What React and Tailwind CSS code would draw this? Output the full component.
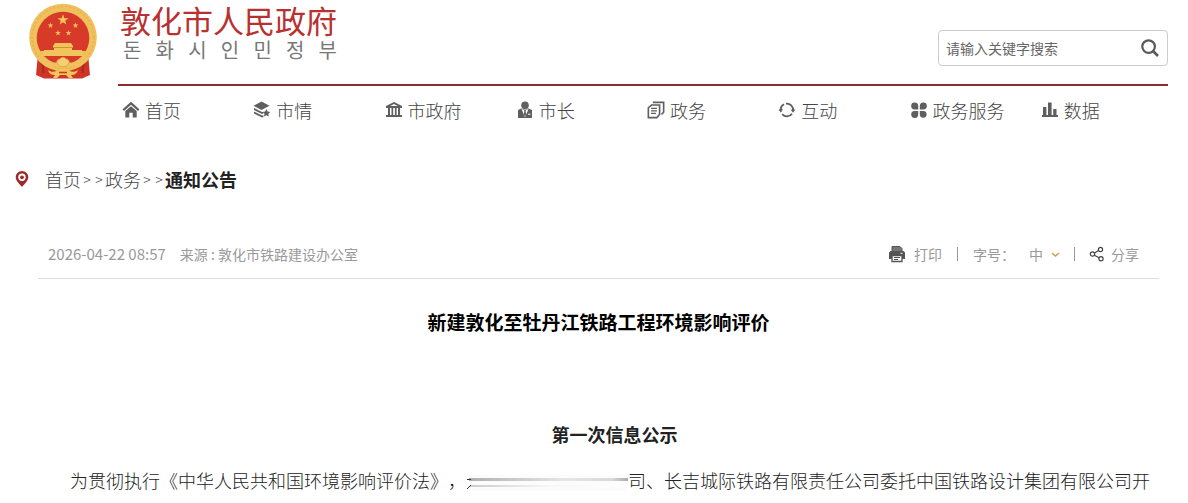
import React from "react";

const HomeIcon = () => (
  <svg width="18" height="18" viewBox="0 0 18 18" fill="#5f5f5f">
    <path d="M9 .8.600 8.200l1.400 1.700L9 3.800l7 6.100 1.400-1.700z" />
    <path d="M3.300 10 9 5.200l5.700 4.800v6.500h-4v-4.800H7.300v4.800h-4z" />
  </svg>
);

const LayersIcon = () => (
  <svg width="18" height="18" viewBox="0 0 18 18" fill="#5f5f5f">
    <path d="M8.500.500 16.500 4.700 8.500 8.900.500 4.700z" />
    <path d="M1 7v2l8 4 1.500-.7-.6-1.300L9 11z" />
    <path d="M1 10.600v2l8 4 1.500-.7-.2-1.700-1.300.4z" />
    <path d="m13.400 8 1.200 2.500 2.700.4-2 1.900.5 2.700-2.400-1.300-2.400 1.300.5-2.700-2-1.900 2.700-.4z" />
  </svg>
);

const BankIcon = () => (
  <svg width="18" height="18" viewBox="0 0 18 18" fill="#5f5f5f">
    <path fillRule="evenodd" d="M9 1 1 5v2h16V5zM9 3l3.800 2H5.200z" />
    <path d="M3 7h2v7H3zM6.500 7h1.700v7H6.500zM9.900 7h1.700v7H9.900zM13 7h2v7h-2zM1 14h16v2H1z" />
  </svg>
);

const MayorIcon = () => (
  <svg width="18" height="18" viewBox="0 0 18 18" fill="#5f5f5f">
    <circle cx="9" cy="4.2" r="3.8" />
    <path d="M5.300 7.600 2 9v8h14V9l-3.300-1.400z" />
    <path d="M5.500 8 9 16.500 12.500 8l-1.500.5H7z" fill="#fff" />
    <path d="M8 9h2l-.4 1.500.7 3L9 15.500l-1.300-2 .7-3z" />
    <path d="M12 13.200h2.500" stroke="#fff" strokeWidth="1" />
  </svg>
);

const DocsIcon = () => (
  <svg width="18" height="18" viewBox="0 0 20 20" fill="none" stroke="#5f5f5f" strokeWidth="1.8">
    <path d="M5 4.500h9v10.200L11 18.500H1.500V7.500z" />
    <path d="M6.500 1.500h12v11l-2.400 2.400" />
    <path d="M4.500 8.200H11M4.500 11H11M4.500 13.800H10" strokeWidth="1.4" />
  </svg>
);

const CycleIcon = () => (
  <svg width="18" height="18" viewBox="0 0 18 18" fill="none" stroke="#5f5f5f" strokeWidth="1.8">
    <path d="M3 11.200A6.200 6.200 0 0 1 6 3.300M8 2.700a6.200 6.200 0 0 1 7 7M14 12.700a6.200 6.200 0 0 1-9.800.4" />
    <path d="m12.600 8.800 4.800-.2-2.300 3.200zM.600 9.800l4.600-.6-2.500-2.800z" fill="#5f5f5f" stroke="none" />
  </svg>
);

const CloverIcon = () => (
  <svg width="18" height="18" viewBox="0 0 18 18" fill="#5f5f5f">
    <path d="M4.600 1.500A3.500 3.500 0 0 1 8.200 5v3.400H4.600a3.400 3.400 0 0 1 0-6.900zM13.400 1.500a3.400 3.400 0 0 1 0 6.900H9.800V5a3.500 3.500 0 0 1 3.600-3.500zM4.600 9.900h3.600v3.300a3.500 3.500 0 1 1-3.600-3.300zM9.800 9.900h3.600a3.400 3.400 0 1 1-3.600 3.400z" />
  </svg>
);

const BarsIcon = () => (
  <svg width="18" height="18" viewBox="0 0 18 18" fill="#5f5f5f">
    <path d="M2 6h3.400v8H2zM7 1.500h3.600V14H7zM12.200 8h3.300v6h-3.300zM1 14h16v2H1z" />
  </svg>
);

const SearchIcon = () => (
  <svg width="20" height="20" viewBox="0 0 20 20" fill="none" stroke="#5a5a5a" strokeWidth="2.2">
    <circle cx="8.600" cy="8.600" r="6.300" />
    <path d="m13 13 5 5" strokeWidth="2.6" />
  </svg>
);

const PinIcon = () => (
  <svg width="14" height="16" viewBox="0 0 14 16">
    <path d="M7 0a6.300 6.300 0 0 1 6.300 6.300C13.300 9.800 9.500 13 7 16 4.500 13 .700 9.800.700 6.300A6.300 6.300 0 0 1 7 0z" fill="#9c2b2b" />
    <circle cx="7" cy="6.300" r="3.700" fill="#fff" />
    <circle cx="7" cy="6.300" r="1.900" fill="#9c2b2b" />
  </svg>
);

const PrinterIcon = () => (
  <svg width="18" height="18" viewBox="0 0 18 18">
    <path d="M4 1.500h8l2 2V7H4z" fill="#777" stroke="#555" />
    <path d="M2.500 6h13L17 7.500V14h-3v-3H4v3H1V7.500z" fill="#555" />
    <path d="M4 10.500h10v6H4z" fill="#fff" stroke="#555" strokeWidth="1.3" />
    <path d="M6 12.500h6M6 14.500h4" stroke="#555" />
    <path d="M12.500 8.300h2" stroke="#fff" />
  </svg>
);

const ShareIcon = () => (
  <svg width="16" height="16" viewBox="0 0 16 16" fill="none" stroke="#444" strokeWidth="1.2">
    <circle cx="3.500" cy="8" r="2.200" />
    <circle cx="11.500" cy="3.500" r="2.100" />
    <circle cx="12" cy="12.800" r="2.100" />
    <path d="m5.400 7 4.200-2.500M5.300 9.200l4.800 2.600" />
  </svg>
);

const STAR = "M0-5 1.200-1.600H4.800L1.900.600 2.900 4 0 2-2.900 4-1.900.600-4.800-1.600H-1.200z";

const Emblem = () => (
  <svg width="70" height="76" viewBox="8 3 70 76" role="img" aria-label="国徽">
    <path d="M18 54 16 75l8 3.500h38l8-3.500-2-21z" fill="#cf3426" />
    <path d="M20 60c3 4 4 8 3 13M66 60c-3 4-4 8-3 13" stroke="#a92a20" strokeWidth="2" fill="none" />
    <circle cx="43" cy="37.500" r="33.800" fill="#efc05c" />
    <circle cx="43" cy="37.500" r="31" fill="none" stroke="#e6b24c" strokeWidth="1.5" strokeDasharray="2 2" />
    <circle cx="43" cy="38" r="26.300" fill="#d83a2a" />
    <g fill="#f2c45c">
      <path d={STAR} transform="translate(43 20) scale(1.15)" />
      <path d={STAR} transform="translate(30.500 25.500) scale(.6)" />
      <path d={STAR} transform="translate(55.500 25.500) scale(.6)" />
      <path d={STAR} transform="translate(38 33) scale(.6)" />
      <path d={STAR} transform="translate(48.500 33) scale(.6)" />
      <path d="M35 43h16l2 3v1h-1v3h10v4H24v-4h10v-3h-1v-1z" />
      <path d="M20 51h46l-3 5H23z" />
    </g>
    <path d="M33 47.500h20" stroke="#d98e35" />
    <path d="M20 56c6 6 13 8 18 6l5-3 5 3c5 2 12 0 18-6l3 2c-4 6-10 9-17 9H34c-7 0-13-3-17-9z" fill="#efc05c" />
    <path d="M37 63a3 3 0 0 1 3-4 3.500 3.500 0 0 1 6 0 3 3 0 0 1 3 4l-3 3.500h-6z" fill="#f7cf72" stroke="#dda03c" strokeWidth=".8" />
    <path d="M28 70c4 3 8 2 11-1h8c3 3 7 4 11 1-1 4-4 5-7 5l2 3h-4l-3-3h-6l-3 3h-4l2-3c-3 0-6-1-7-5z" fill="#f2c45c" />
    <path d="M39 72.500h8" stroke="#cf3426" strokeWidth="1.5" />
  </svg>
);

// Blurred-out company name inside the first paragraph
const Redacted = () => (
  <svg width="162" height="16" viewBox="0 0 162 16" preserveAspectRatio="none" className="inline-block align-middle" aria-hidden="true">
    <defs>
      <linearGradient id="upper">
        <stop offset="0" stopColor="#b0b0b0" />
        <stop offset="0.6" stopColor="#e6e6e6" />
        <stop offset="0.9" stopColor="#d8d8d8" />
        <stop offset="1" stopColor="#aaa" />
      </linearGradient>
      <linearGradient id="lower">
        <stop offset="0" stopColor="#ccc" />
        <stop offset="0.5" stopColor="#f6f6f6" />
        <stop offset="1" stopColor="#fff" />
      </linearGradient>
    </defs>
    <rect x="4" width="156" height="16" fill="#fcfcfc" />
    <rect x="3" y="3" width="159" height="3" fill="url(#upper)" />
    <rect x="4" y="10" width="156" height="2" fill="url(#lower)" />
    <path d="M1 4.500h4M1 14l4-4" stroke="#333" />
  </svg>
);

const navItems = [
  { name: "首页", icon: <HomeIcon /> },
  { name: "市情", icon: <LayersIcon /> },
  { name: "市政府", icon: <BankIcon /> },
  { name: "市长", icon: <MayorIcon /> },
  { name: "政务", icon: <DocsIcon /> },
  { name: "互动", icon: <CycleIcon /> },
  { name: "政务服务", icon: <CloverIcon /> },
  { name: "数据", icon: <BarsIcon /> },
];

const koreanName = ["돈", "화", "시", "인", "민", "정", "부"];

const Arrows = () => (
  <span className="flex w-6 justify-around text-sm">
    <span>&gt;</span>
    <span>&gt;</span>
  </span>
);

const App = () => {
  return (
    <div className="bg-white text-[#444] font-['Noto_Sans_CJK_SC',sans-serif]">
      {/* Header */}
      <header className="flex gap-5 pl-7 pr-5">
        <div className="shrink-0 pt-[3px]">
          <Emblem />
        </div>
        <div className="grow">
          <div className="flex justify-between border-b-2 border-[#8e2b2e] h-[86px]">
            <div className="pt-[2px] pl-[2px]">
              <h1 className="text-[31px] leading-9 text-[#b93030]">敦化市人民政府</h1>
              <p
                lang="ko"
                className="flex justify-between pl-[3px] text-xl leading-6 text-[#777] font-['Noto_Sans_CJK_KR',sans-serif]"
              >
                {koreanName.map((c) => (
                  <span key={c}>{c}</span>
                ))}
              </p>
            </div>
            <form className="mt-[30px] flex h-9 w-[230px] items-center rounded border border-[#ccc] px-[7px]">
              <input
                type="text"
                aria-label="请输入关键字搜索"
                placeholder="请输入关键字搜索"
                className="min-w-0 grow text-sm outline-none placeholder:text-[#666]"
              />
              <button type="button" aria-label="搜索">
                <SearchIcon />
              </button>
            </form>
          </div>
          <nav className="grid grid-cols-8 pt-[10px]">
            {navItems.map((item) => (
              <a key={item.name} href="#" className="flex h-7 items-center gap-[5px] whitespace-nowrap pl-1 text-lg font-light">
                {item.icon}
                {item.name}
              </a>
            ))}
          </nav>
        </div>
      </header>

      {/* Breadcrumb */}
      <div className="mt-[41px] flex items-center pl-[15px] text-lg leading-7 font-light">
        <PinIcon />
        <a href="#" className="ml-4">首页</a>
        <Arrows />
        <a href="#">政务</a>
        <Arrows />
        <strong className="font-bold text-[#222]">通知公告</strong>
      </div>

      <main className="ml-[38px] mr-[29px]">
        {/* Meta */}
        <div className="mt-[49px] flex h-[37px] items-start justify-between border-b border-[#ddd] pl-[10px] pr-5 text-sm leading-6 text-[#999]">
          <div className="flex">
            <time className="text-[15px]">2026-04-22 08:57</time>
            <span className="ml-[14px]">来源 : 敦化市铁路建设办公室</span>
          </div>
          <div className="flex items-center">
            <button type="button" className="flex items-center gap-2">
              <PrinterIcon />
              打印
            </button>
            <span className="mx-[15px] h-[14px] border-l border-[#999]" />
            <label htmlFor="size">字号：</label>
            <span className="ml-[14px] flex items-center">
              <select id="size" className="w-[22px] appearance-none bg-transparent outline-none">
                <option>中</option>
              </select>
              <svg width="9" height="8" viewBox="0 0 9 8" fill="none" stroke="#c9a04a" strokeWidth="1.5">
                <path d="m1 3 3.500 3L8 3" />
              </svg>
            </span>
            <span className="mx-[14px] h-[14px] border-l border-[#999]" />
            <button type="button" className="flex items-center gap-[6px]">
              <ShareIcon />
              分享
            </button>
          </div>
        </div>

        {/* Article */}
        <h2 className="mt-[29px] text-center text-[19px] leading-7 font-bold text-black">
          新建敦化至牡丹江铁路工程环境影响评价
        </h2>
        <article className="mt-[76px] text-lg leading-[44px] text-[#222]">
          <p className="text-center indent-8 font-bold">第一次信息公示</p>
          <p className="-mx-1 mt-[2px] indent-9 whitespace-nowrap font-light [text-spacing-trim:space-all]">
            为贯彻执行《中华人民共和国环境影响评价法》，
            <Redacted />
            司、长吉城际铁路有限责任公司委托中国铁路设计集团有限公司开
          </p>
        </article>
      </main>
    </div>
  );
};

export default App;
